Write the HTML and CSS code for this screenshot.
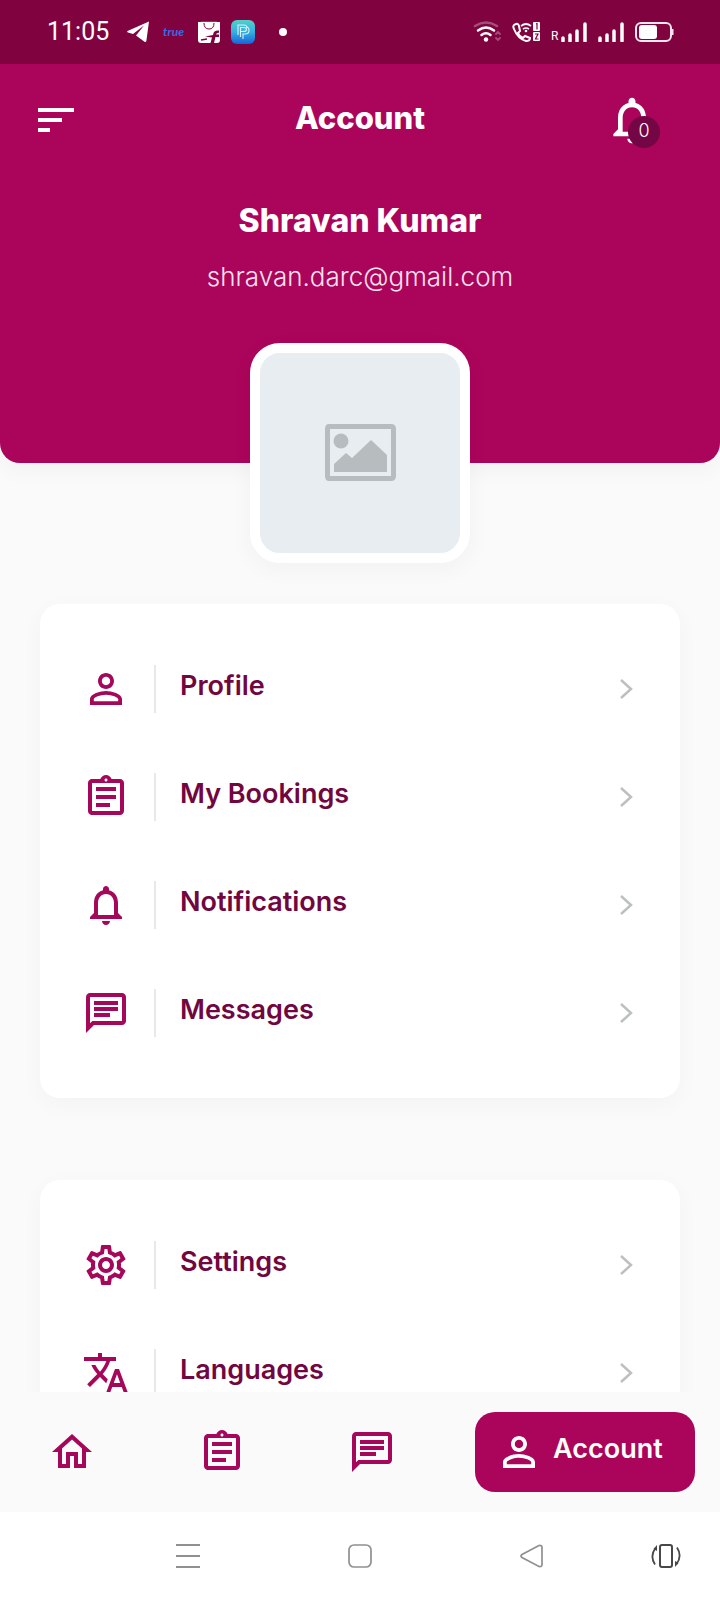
FILE: index.html
```html
<!DOCTYPE html>
<html lang="en">
<head>
<meta charset="utf-8">
<meta name="viewport" content="width=device-width, initial-scale=1">
<title>Account</title>
<link rel="stylesheet" href="styles.css">
</head>
<body>
<svg class="sprite" aria-hidden="true">
  <symbol id="person" viewBox="0 0 24 24"><path d="M12 5.900c1.160 0 2.100.94 2.100 2.100s-.94 2.100-2.100 2.100S9.900 9.160 9.900 8s.94-2.100 2.100-2.100m0 9c2.970 0 6.100 1.460 6.100 2.100v1.100H5.900V17c0-.64 3.130-2.100 6.100-2.100M12 4C9.790 4 8 5.790 8 8s1.790 4 4 4 4-1.790 4-4-1.790-4-4-4zm0 9c-2.670 0-8 1.340-8 4v3h16v-3c0-2.660-5.330-4-8-4z"/></symbol>
  <symbol id="clipboard" viewBox="0 0 24 24"><path d="M7 15h7v2H7zm0-4h10v2H7zm0-4h10v2H7zm12-4h-4.180C14.400 1.840 13.300 1 12 1c-1.300 0-2.400.84-2.820 2H5c-.14 0-.27.01-.4.04-.39.08-.74.28-1.010.55-.18.18-.33.4-.43.64-.1.23-.16.49-.16.77v14c0 .27.06.54.16.78s.25.45.43.64c.27.27.62.47 1.010.55.13.02.26.03.4.03h14c1.100 0 2-.9 2-2V5c0-1.100-.9-2-2-2zm-7-.25c.41 0 .75.34.75.75s-.34.75-.75.75-.75-.34-.75-.75.34-.75.75-.75zM19 19H5V5h14v14z"/></symbol>
  <symbol id="bell" viewBox="0 0 24 24"><path d="M12 22c1.100 0 2-.9 2-2h-4c0 1.100.9 2 2 2zm6-6v-5c0-3.070-1.630-5.640-4.500-6.320V4c0-.83-.67-1.500-1.500-1.500s-1.500.67-1.500 1.500v.68C7.640 5.360 6 7.920 6 11v5l-2 2v1h16v-1l-2-2zm-2 1H8v-6c0-2.480 1.510-4.500 4-4.500s4 2.020 4 4.500v6z"/></symbol>
  <symbol id="chat" viewBox="0 0 24 24"><path d="M4 4h16v12H5.170L4 17.170V4m0-2c-1.100 0-1.990.9-1.990 2L2 22l4-4h14c1.100 0 2-.9 2-2V4c0-1.100-.9-2-2-2H4zm2 10h8v2H6v-2zm0-3h12v2H6V9zm0-3h12v2H6V6z"/></symbol>
  <symbol id="gear" viewBox="0 0 24 24"><path d="M19.430 12.980c.04-.32.07-.64.07-.98 0-.34-.03-.66-.07-.98l2.110-1.650c.19-.15.24-.42.12-.64l-2-3.460c-.09-.16-.26-.25-.44-.25-.06 0-.12.01-.17.03l-2.490 1c-.52-.4-1.080-.73-1.690-.98l-.38-2.650C14.460 2.180 14.250 2 14 2h-4c-.25 0-.46.18-.49.42l-.38 2.650c-.61.25-1.170.59-1.690.98l-2.490-1c-.06-.02-.12-.03-.18-.03-.17 0-.34.09-.43.25l-2 3.460c-.13.22-.07.49.12.64l2.110 1.650c-.04.32-.07.65-.07.98 0 .33.03.66.07.98l-2.110 1.650c-.19.15-.24.42-.12.64l2 3.460c.09.16.26.25.44.25.06 0 .12-.01.17-.03l2.490-1c.52.4 1.080.73 1.690.98l.38 2.650c.03.24.24.42.49.42h4c.25 0 .46-.18.49-.42l.38-2.650c.61-.25 1.170-.59 1.690-.98l2.490 1c.06.02.12.03.18.03.17 0 .34-.09.43-.25l2-3.460c.12-.22.07-.49-.12-.64l-2.110-1.650zm-1.980-1.710c.04.31.05.52.05.73 0 .21-.02.43-.05.73l-.14 1.130.89.7 1.080.84-.7 1.210-1.270-.51-1.040-.42-.9.68c-.43.32-.84.56-1.250.73l-1.060.43-.16 1.130-.2 1.350h-1.400l-.19-1.350-.16-1.130-1.060-.43c-.43-.18-.83-.41-1.230-.71l-.91-.7-1.060.43-1.270.51-.7-1.210 1.080-.84.89-.7-.14-1.130c-.03-.31-.05-.54-.05-.74s.02-.43.05-.73l.14-1.130-.89-.7-1.080-.84.7-1.210 1.270.51 1.040.42.9-.68c.43-.32.84-.56 1.250-.73l1.060-.43.16-1.130.2-1.350h1.390l.19 1.350.16 1.130 1.060.43c.43.18.83.41 1.230.71l.91.7 1.060-.43 1.270-.51.7 1.210-1.070.85-.89.7.14 1.130zM12 8c-2.210 0-4 1.790-4 4s1.790 4 4 4 4-1.790 4-4-1.790-4-4-4zm0 6c-1.100 0-2-.9-2-2s.9-2 2-2 2 .9 2 2-.9 2-2 2z"/></symbol>
  <symbol id="translate" viewBox="0 0 24 24"><path d="M12.870 15.070l-2.540-2.510.03-.03c1.740-1.940 2.980-4.170 3.710-6.530H17V4h-7V2H8v2H1v1.990h11.170C11.500 7.920 10.440 9.750 9 11.350 8.070 10.320 7.300 9.190 6.690 8h-2c.73 1.630 1.730 3.170 2.980 4.560l-5.090 5.020L4 19l5-5 3.110 3.110.76-2.040zM18.500 10h-2L12 22h2l1.120-3h4.750L21 22h2l-4.500-12zm-2.620 7l1.620-4.330L19.120 17h-3.240z"/></symbol>
  <symbol id="home" viewBox="0 0 24 24"><path d="M12 5.690l5 4.500V18h-2v-6H9v6H7v-7.810l5-4.500M12 3L2 12h3v8h6v-6h2v6h6v-8h3L12 3z"/></symbol>
  <symbol id="chevron" viewBox="0 0 24 24"><path d="M7 3l10 9-10 9" fill="none" stroke="currentColor" stroke-width="2.500"/></symbol>
</svg>

<div class="app">
  <div class="status">
    <div class="status-group">
      <span class="clock">11:05</span>
      <svg width="24" height="24" viewBox="0 0 24 24"><path fill="#fff" d="M23 1.500 L1.500 11 Q.5 12 2 12.600 L7 14 L18 5.500 L10 15.500 L18.500 21.800 Q20 22.500 20.400 20.800 Z"/></svg>
      <span class="true">true</span>
      <svg width="24" height="24" viewBox="0 0 24 24"><path fill="#fff" d="M1 2h22v18q0 3-3 3H4q-3 0-3-3z"/><path d="M7 3q0 6 5 6t5-6" fill="none" stroke="#80033f" stroke-width="1"/><path d="M4 1.500h16" stroke="#c01a6e" stroke-width="1"/><path d="M22 10.500q-4.500-.5-5.500 2.500l-.5 2-8 1.500 7 1-1.500 5.500h3.500l1.500-6h3.500v-2.500h-3q.5-2 3-1.800z" fill="#80033f"/><path d="M4 20l6-1" stroke="#80033f" stroke-width="1.500"/></svg>
      <svg class="pay" width="24" height="24" viewBox="0 0 24 24"><defs><linearGradient id="payfill" x2="0" y2="1"><stop stop-color="#52d0c8"/><stop offset=".5" stop-color="#37aee0"/><stop offset="1" stop-color="#1464dc"/></linearGradient></defs><rect width="24" height="24" rx="6" fill="url(#payfill)"/><path d="M7 15V5h6q3 0 3 3M9.500 17V7.500h3q3 0 3 2t-3 2h-2.500M12 19V14h2q4 0 4-3.500T15 7" fill="none" stroke="#d5f5fa" stroke-width="1.100"/></svg>
      <svg width="8" height="8"><circle cx="4" cy="4" r="4" fill="#fff"/></svg>
    </div>
    <div class="status-group status-right">
      <svg width="28" height="22" viewBox="0 0 28 22"><g fill="none" stroke="#fff" stroke-width="2.500" stroke-linecap="round"><path d="M2 5q11-7 22 0" stroke="#a34f7c"/><path d="M5 9.500q8-6 16 0M8.500 14q4.500-3.500 9 0"/><path d="M23 13l2-2 2 2M23 17l2 2 2-2" stroke="#a34f7c" stroke-width="1.800"/></g><circle cx="13" cy="18.500" r="2.200" fill="#fff"/></svg>
      <svg width="28" height="20" viewBox="0 0 28 20"><g fill="none" stroke="#fff" stroke-width="2"><path d="M4 2Q0 3 2 7q4 10 12 12 4 0 4-3l-5-2-2 2q-4-2-5-5l2-2-1-5q-1-3-3-2z"/><path d="M9 4q5-4 10 0M11 7q3-2 6 0" stroke-width="1.700"/></g><circle cx="14" cy="9" r="1.300" fill="#fff"/><rect x="21" y="0" width="7" height="9" rx="1" fill="#fff"/><rect x="21" y="10" width="7" height="9" rx="1" fill="#fff"/><path d="M24 2l1-.5V7.500M23 12h3l-2.500 5h3" fill="none" stroke="#80033f" stroke-width="1.200"/></svg>
      <span class="roam"><span class="roam-label">R</span><svg width="26" height="20"><path d="M2 19v-3M9 19v-6M16 19V9M24 19V2" stroke="#fff" stroke-width="3.500" stroke-linecap="round"/></svg></span>
      <svg width="26" height="20"><path d="M2 19v-3M9 19v-6M16 19V9M24 19V2" stroke="#fff" stroke-width="3.500" stroke-linecap="round"/></svg>
      <svg width="39" height="20" viewBox="0 0 39 20"><rect x="1" y="1" width="35" height="18" rx="5" fill="none" stroke="#f4e6ee" stroke-width="2"/><rect x="4" y="3" width="18" height="14" rx="3" fill="#fff"/><path d="M37.500 7v6" stroke="#f4e6ee" stroke-width="2"/></svg>
    </div>
  </div>

  <main class="content">
    <header class="header">
      <div class="bar">
        <button class="icon-button menu" aria-label="Menu"><svg width="36" height="24" viewBox="0 0 36 24"><path d="M0 0h36v4H0zM0 10h24v4H0zM0 20h12v4H0z"/></svg></button>
        <h1 class="title">Account</h1>
        <button class="icon-button alerts" aria-label="Alerts"><svg width="56" height="56"><use href="#bell"/></svg><span class="badge">0</span></button>
      </div>
      <p class="name">Shravan Kumar</p>
      <p class="email">shravan.darc@gmail.com</p>
    </header>

    <div class="avatar">
      <svg width="72" height="60" viewBox="0 0 72 60"><path fill-rule="evenodd" d="M5 1h62q5 0 5 5v47q0 5-5 5H5q-4 0-4-5V6q0-5 4-5zm1 5v47h61V6z"/><circle cx="17" cy="18" r="7.500"/><path d="M10 49v-8l12-11 6 5 19-18 16 15v17z"/></svg>
    </div>

    <nav class="card" aria-label="Account pages">
      <a class="row" href="#"><svg class="icon"><use href="#person"/></svg><span class="label">Profile</span><svg class="chevron"><use href="#chevron"/></svg></a>
      <a class="row" href="#"><svg class="icon"><use href="#clipboard"/></svg><span class="label">My Bookings</span><svg class="chevron"><use href="#chevron"/></svg></a>
      <a class="row" href="#"><svg class="icon"><use href="#bell"/></svg><span class="label">Notifications</span><svg class="chevron"><use href="#chevron"/></svg></a>
      <a class="row" href="#"><svg class="icon"><use href="#chat"/></svg><span class="label">Messages</span><svg class="chevron"><use href="#chevron"/></svg></a>
    </nav>

    <nav class="card" aria-label="Preferences">
      <a class="row" href="#"><svg class="icon"><use href="#gear"/></svg><span class="label">Settings</span><svg class="chevron"><use href="#chevron"/></svg></a>
      <a class="row" href="#"><svg class="icon"><use href="#translate"/></svg><span class="label">Languages</span><svg class="chevron"><use href="#chevron"/></svg></a>
    </nav>
  </main>

  <nav class="tabs" aria-label="Main">
    <a class="tab" href="#" aria-label="Home"><svg class="icon"><use href="#home"/></svg></a>
    <a class="tab" href="#" aria-label="Bookings"><svg class="icon"><use href="#clipboard"/></svg></a>
    <a class="tab" href="#" aria-label="Chats"><svg class="icon"><use href="#chat"/></svg></a>
    <a class="tab active" href="#" aria-current="page"><svg class="icon"><use href="#person"/></svg><span class="tab-label">Account</span></a>
  </nav>

  <div class="system">
    <button class="icon-button" aria-label="Recent apps"><svg width="24" height="26"><path d="M0 2h24M0 13h24M0 24h24" stroke="#909090" stroke-width="2"/></svg></button>
    <button class="icon-button" aria-label="Home screen"><svg width="24" height="24"><rect x="1" y="1" width="22" height="22" rx="5" fill="none" stroke="#909090" stroke-width="1.700"/></svg></button>
    <button class="icon-button" aria-label="Back"><svg width="24" height="24"><path d="M19 1.500L2 10.500q-2 1.500 0 3l17 9q3 .5 3-2V3.500q0-2.500-3-2z" fill="none" stroke="#909090" stroke-width="1.700"/></svg></button>
    <button class="icon-button" aria-label="Rotate"><svg width="30" height="24" viewBox="0 0 30 24"><rect x="9" y="1" width="12" height="22" rx="2" fill="none" stroke="#484848" stroke-width="2"/><path d="M4 20.500Q-1.500 12 4.500 4M26 3.500q5.500 8.500-.5 16.500" fill="none" stroke="#484848" stroke-width="1.800"/><path d="M2.500 5L6 1v6zM27.500 19L24 23v-6z" fill="#484848"/></svg></button>
  </div>
</div>
</body>
</html>
```
FILE: styles.css
```css
* { box-sizing: border-box; }
body {
  margin: 0;
  background: #fafafa;
  font-family: Inter, "Liberation Sans", sans-serif;
}
h1, p { margin: 0; }
a { color: inherit; text-decoration: none; }
svg { display: block; flex: none; }
.sprite { position: absolute; width: 0; height: 0; }

.app { display: flex; flex-direction: column; height: 100vh; }

/* Status bar */
.status {
  flex: none;
  display: flex;
  justify-content: space-between;
  align-items: center;
  height: 64px;
  padding: 0 46px 0 47px;
  background: #80033f;
  color: #fff;
}
.status-group { display: flex; align-items: center; }
.status-right { gap: 11px; }
.clock { width: 79px; font: 400 25px/30px Roboto, sans-serif; }
.true { width: 34px; margin-left: 13px; color: #2f6fe0; font: italic 700 12px/16px Lato, sans-serif; }
.pay { margin: 0 24px 0 10px; }
.roam { display: flex; align-items: flex-end; }
.roam-label { width: 10px; font: 400 12px/11px Roboto, sans-serif; }

/* Scrolling page */
.content { flex: 1; min-height: 0; overflow-y: auto; scrollbar-width: none; }
.header {
  padding: 28px 38px 168px;
  border-radius: 0 0 20px 20px;
  background: #ab045b;
  color: #fff;
  text-align: center;
  box-shadow: 0 6px 24px rgba(0, 0, 0, .04);
}
.bar { display: grid; grid-template-columns: 1fr auto 1fr; align-items: center; }
.icon-button { padding: 0; border: 0; background: none; color: inherit; fill: currentColor; }
.menu { justify-self: start; }
.title { padding-bottom: 5px; font-size: 31px; line-height: 36px; font-weight: 800; }
.alerts { position: relative; justify-self: end; margin-right: 22px; }
.badge {
  position: absolute;
  right: 0;
  bottom: 0;
  width: 32px;
  height: 32px;
  border-radius: 50%;
  background: #750645;
  font: 300 18px/30px Inter, sans-serif;
}
.name { margin-top: 55px; font-size: 32px; line-height: 36px; font-weight: 800; }
.email { margin-top: 20px; font-size: 26px; line-height: 36px; font-weight: 300; color: #fbe3f0; }

.avatar {
  position: relative;
  display: grid;
  place-items: center;
  width: 220px;
  height: 220px;
  margin: -120px auto 41px;
  border: 10px solid #fff;
  border-radius: 30px;
  background: #e7edf0;
  fill: #b7bcbf;
  box-shadow: 0 6px 24px rgba(0, 0, 0, .04);
}

/* Menu cards */
.card {
  margin: 0 40px 82px;
  padding: 31px 42px;
  border-radius: 20px;
  background: #fff;
  box-shadow: 0 6px 24px rgba(0, 0, 0, .03);
}
.row { display: flex; align-items: center; height: 108px; }
.icon { width: 48px; height: 48px; fill: #a5085a; }
.label {
  flex: 1;
  height: 48px;
  margin-left: 24px;
  padding-left: 24px;
  border-left: 2px solid #e8e8e8;
  color: #72063f;
  font-size: 27px;
  line-height: 42px;
  font-weight: 600;
}
.chevron { width: 24px; height: 24px; color: #bcc0c0; }

/* Bottom tabs */
.tabs {
  flex: none;
  display: flex;
  justify-content: space-between;
  align-items: center;
  height: 120px;
  padding: 0 25px;
  background: #fafafa;
}
.tab { display: flex; align-items: center; justify-content: center; width: 94px; height: 80px; }
.active {
  justify-content: flex-start;
  gap: 10px;
  width: 220px;
  padding-left: 20px;
  border-radius: 20px;
  background: #ab045b;
  color: #fff;
}
.active .icon { fill: #fff; }
.tab-label { padding-bottom: 6px; font-size: 27px; line-height: 36px; font-weight: 600; }

/* System navigation */
.system {
  flex: none;
  display: grid;
  grid-template-columns: 172fr 172fr 172fr 96fr;
  place-items: center;
  height: 88px;
  padding: 0 6px 0 102px;
  background: #fff;
}
```
